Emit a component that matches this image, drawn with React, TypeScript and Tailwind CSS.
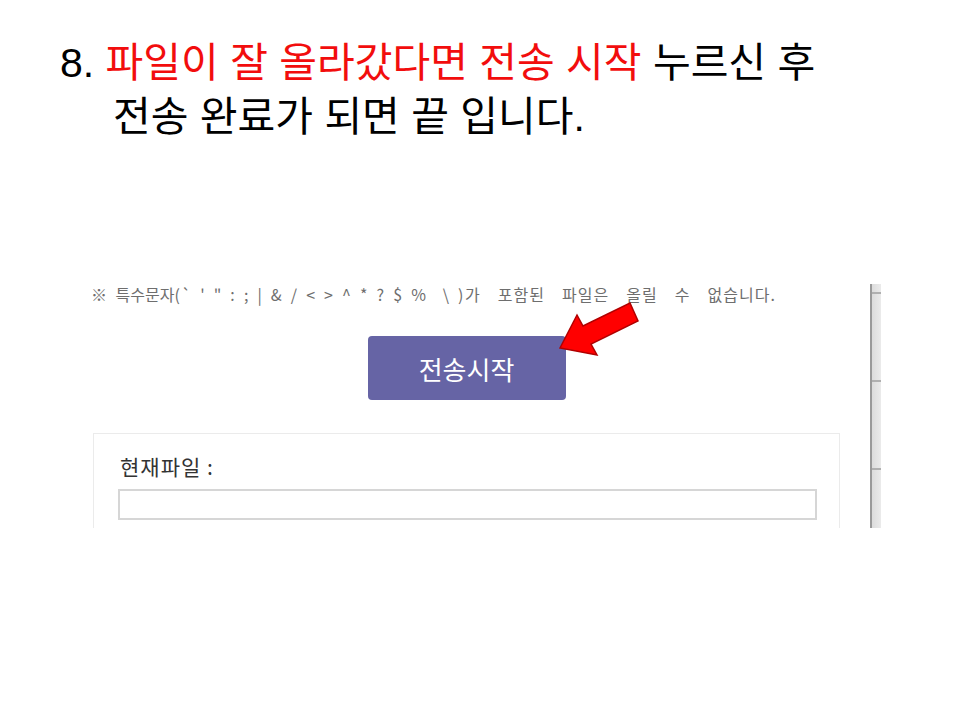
import React from "react";

export default function App() {
  return (
    <div className="relative h-[720px] w-[960px] overflow-hidden bg-white">
      <div className="pl-[60px] pt-[36px] text-[41px] leading-[54px] text-black font-['Liberation_Sans','Noto_Sans_CJK_KR',sans-serif]">
        <div className="whitespace-nowrap">
          8. <span className="text-[#f20d0d]">파일이 잘 올라갔다면 전송 시작</span> 누르신 후
        </div>
        <div className="whitespace-nowrap pl-[53px]">전송 완료가 되면 끝 입니다.</div>
      </div>

      <div className="ml-[91px] mt-[140px] flex h-[244px] w-[790px] font-['Noto_Sans_CJK_KR',sans-serif]">
        <div className="flex w-[749px] flex-col">
          <div className="whitespace-nowrap text-[16px] leading-[20px] text-[#6e6e6e]">
            <span className="[word-spacing:5px]">※ 특수문자</span>
            <span className="tracking-[1.5px] [word-spacing:2.5px]">(` ' " : ; | &amp; / &lt; &gt; ^ * ? $ %&nbsp; \ )</span>
            <span className="tracking-[1px] [word-spacing:12.5px]">가 포함된 파일은 올릴 수 없습니다.</span>
          </div>
          <div className="mt-[32px] flex justify-center pl-[2px]">
            <div className="flex h-[64px] w-[198px] items-center justify-center rounded-[4px] bg-[#6664a5] text-[26px] text-white">
              전송시작
            </div>
          </div>
          <div className="ml-[2px] mt-[33px] flex-1 border border-b-0 border-[#ebebeb] pl-[24px] pr-[22px] pt-[20px]">
            <div className="pl-[2px] text-[21px] leading-[25px] tracking-[1px] text-[#333333]">현재파일 :</div>
            <div className="mt-[10px] h-[31px] border-2 border-[#d6d6d6] bg-white" />
          </div>
        </div>
        <div className="flex-1" />
        <div className="relative w-[11px] border-l-2 border-[#9a9a9a] bg-gradient-to-r from-[#dcdcdc] to-[#ebebeb]">
          <div className="absolute left-0 right-0 top-[8px] h-[2px] bg-[#b0b0b0]" />
          <div className="absolute left-0 right-0 top-[96px] h-[2px] bg-[#b0b0b0]" />
          <div className="absolute left-0 right-0 top-[184px] h-[2px] bg-[#b0b0b0]" />
        </div>
      </div>

      <svg className="absolute left-0 top-0" width="960" height="720" viewBox="0 0 960 720">
        <polygon
          points="560,348 577,315 583,326 630,303 638,321 591,344 597,355"
          fill="#ff0000"
          stroke="#b00000"
          strokeWidth="1.5"
          strokeLinejoin="miter"
        />
      </svg>
    </div>
  );
}
